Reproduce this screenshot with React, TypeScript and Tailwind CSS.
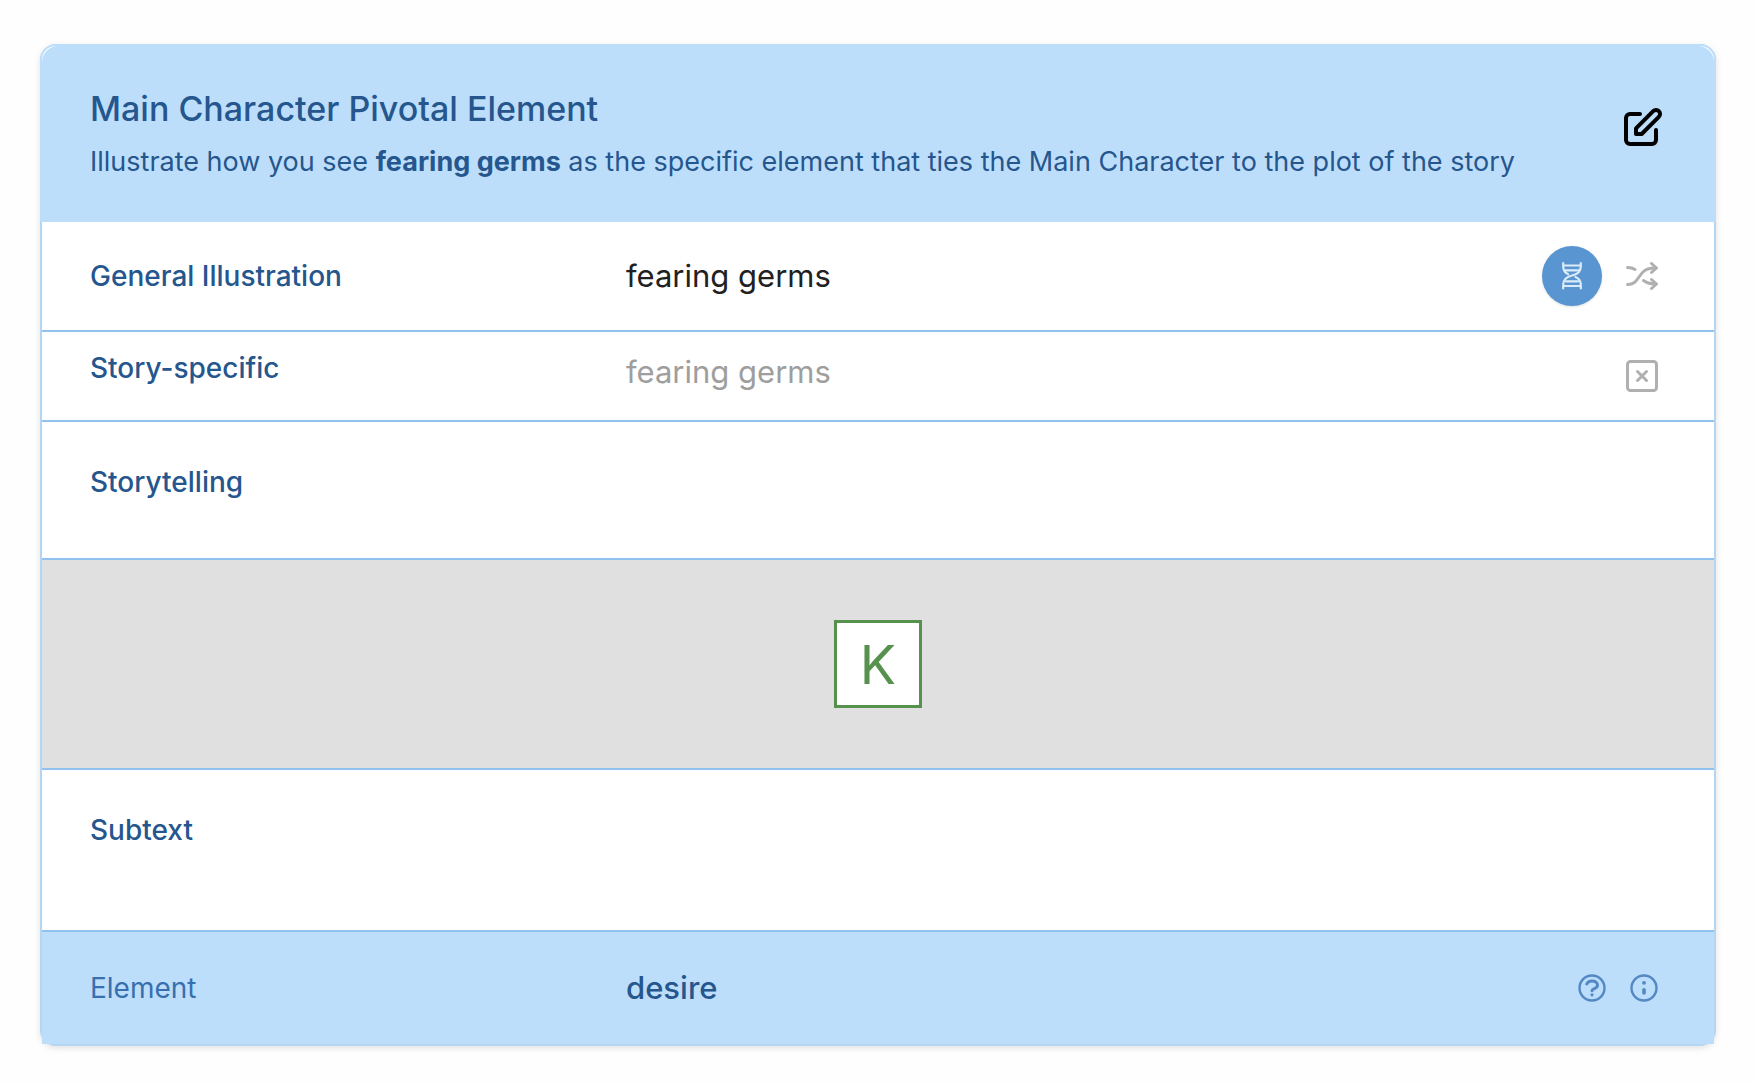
import type { ReactNode } from 'react';

interface RowProps {
  label: string;
  children?: ReactNode;
  className?: string;
  labelClassName?: string;
}

function Row({ label, children, className = '', labelClassName = 'font-medium text-[#25568d]' }: RowProps) {
  return (
    <div className={`grid grid-cols-3 gap-8 px-12 ${className}`}>
      <dt className={`text-[28px] leading-10 ${labelClassName}`}>{label}</dt>
      <dd className="col-span-2 flex items-center justify-between pr-2">{children}</dd>
    </div>
  );
}

function PencilIcon() {
  return (
    <svg className="size-12" viewBox="0 0 24 24" fill="none" stroke="currentColor" strokeWidth="2" strokeLinecap="round" strokeLinejoin="round">
      <path d="M11 5H6a2 2 0 00-2 2v11a2 2 0 002 2h11a2 2 0 002-2v-5m-1.414-9.414a2 2 0 112.828 2.828L11.828 15H9v-2.828l8.586-8.586z" />
    </svg>
  );
}

function DnaIcon() {
  return (
    <svg className="h-7 w-5" viewBox="0 0 20 28" fill="none" stroke="currentColor" strokeWidth="2.2" strokeLinecap="round">
      <path d="M1.2 1.200v3c0 4 1.500 6.500 5 8M18.800 1.200v3c0 6-4 8.300-8.800 9.300S1.200 17.500 1.200 23v3.500M13.500 15c3.800 1.500 5.300 4 5.300 8v3.500" />
      <path d="M2 3.500h16M3 8.300h14M4 19.300h12M2 24h16" />
    </svg>
  );
}

function ShuffleIcon() {
  return (
    <svg className="h-7 w-8" viewBox="0 0 32 28" fill="none" stroke="currentColor" strokeWidth="3" strokeLinecap="round" strokeLinejoin="round">
      <path d="M1.500 5.500c3 0 5.500.600 7.500 2M1.500 22.500c14 0 9-16.500 27-16.500M17.500 18.500c3 2.500 6 3.300 11 3.300M25.500 1.500L30.500 6l-5 4.500M25.500 17.500l5 4.500-5 4.500" />
    </svg>
  );
}

function ClearIcon() {
  return (
    <svg className="size-8" viewBox="0 0 32 32" fill="none" stroke="currentColor" strokeWidth="3" strokeLinecap="round">
      <rect x="1.500" y="1.500" width="29" height="29" rx="3" />
      <path d="M11.500 11.500l9 9M20.500 11.500l-9 9" />
    </svg>
  );
}

function HelpIcon() {
  return (
    <svg className="size-7" viewBox="0 0 28 28" fill="none" stroke="currentColor" strokeWidth="2.4" strokeLinecap="round">
      <circle cx="14" cy="14" r="12.500" />
      <path strokeWidth="3" d="M8.800 10c1-2.200 2.800-3 5-3 3.200 0 5.700 1.500 5.700 4.200 0 3.600-5.500 3-5.500 5.500" />
      <circle cx="14" cy="20.800" r="1.600" fill="currentColor" stroke="none" />
    </svg>
  );
}

function InfoIcon() {
  return (
    <svg className="size-7" viewBox="0 0 28 28" fill="none" stroke="currentColor" strokeWidth="2.4" strokeLinecap="round">
      <circle cx="14" cy="14" r="12.500" />
      <path strokeWidth="3.6" d="M14 15.800v3.200" />
      <circle cx="14" cy="8.800" r="1.900" fill="currentColor" stroke="none" />
    </svg>
  );
}

export default function App() {
  return (
    <main className="min-h-screen bg-[#fefefe] px-10 pt-11 font-['Inter',sans-serif]">
      <section className="rounded-2xl border-2 border-[#b5d6f3] bg-white shadow-[0_2px_6px_rgba(0,0,0,0.12)]">
        <header className="-mx-0.5 -mt-0.5 rounded-t-2xl border-2 border-b-0 border-[#bddefb] bg-white">
          <div className="flex items-start justify-between rounded-t-2xl bg-[#bddefb] px-12 pt-[38px] pb-10 text-[#25568d]">
            <div>
              <h1 className="text-[34px] leading-[50px] font-medium">Main Character Pivotal Element</h1>
              <p className="mt-2 text-[27px] leading-10">
                Illustrate how you see <strong>fearing germs</strong> as the specific element that ties the Main Character to the plot of the story
              </p>
            </div>
            <button type="button" aria-label="Edit" className="mt-5 text-black">
              <PencilIcon />
            </button>
          </div>
        </header>

        <dl className="divide-y-2 divide-[#92c1ee]">
          <Row label="General Illustration" className="items-center py-6">
            <span className="text-[31px] leading-10 text-[#212121]">fearing germs</span>
            <div className="flex items-center gap-6">
              <button type="button" aria-label="Genome" className="flex size-15 items-center justify-center rounded-full bg-[#5895d1] text-[#dcebf9] shadow-sm">
                <DnaIcon />
              </button>
              <button type="button" aria-label="Shuffle" className="text-[#b0b0b0]">
                <ShuffleIcon />
              </button>
            </div>
          </Row>
          <Row label="Story-specific" className="items-start pt-4 pb-6">
            <span className="text-[31px] leading-12 text-[#9e9e9e]">fearing germs</span>
            <button type="button" aria-label="Clear" className="mt-2 text-[#b0b0b0]">
              <ClearIcon />
            </button>
          </Row>
          <Row label="Storytelling" className="pt-10 pb-14" />
          <div className="flex justify-center bg-[#e0e0e0] py-15">
            <div className="flex size-22 items-center justify-center border-3 border-[#56924d] bg-white text-[54px] text-[#56924d]">K</div>
          </div>
          <Row label="Subtext" className="pt-10 pb-20" />
          <Row label="Element" labelClassName="text-[#386fae]" className="items-center bg-[#bddefb] py-9">
            <span className="text-[31px] leading-10 font-medium text-[#25568d]">desire</span>
            <div className="flex gap-6 text-[#5388c2]">
              <button type="button" aria-label="Help">
                <HelpIcon />
              </button>
              <button type="button" aria-label="Info">
                <InfoIcon />
              </button>
            </div>
          </Row>
        </dl>
      </section>
    </main>
  );
}
